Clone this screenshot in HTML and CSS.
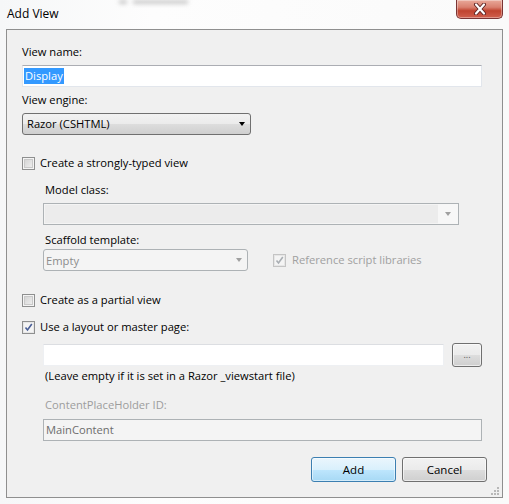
FILE: index.html
```html
<!DOCTYPE html>
<html>
<head>
<meta charset="utf-8">
<link rel="stylesheet" href="styles.css">
</head>
<body>
<div class="window">
  <div class="titlebar">
    <span class="title">Add View</span>
    <span class="ghost"><i class="g1"></i><i class="g2"></i></span>
    <span class="close">
      <svg width="20" height="12" viewBox="0 0 20 12"><path d="M6 1.5 L14 10.5 M14 1.5 L6 10.5" stroke="#5a2020" stroke-width="4" stroke-linecap="round"/><path d="M6 1.5 L14 10.5 M14 1.5 L6 10.5" stroke="#ffffff" stroke-width="2.2" stroke-linecap="round"/></svg>
    </span>
  </div>
  <div class="panel">
    <div class="label l-name">View name:</div>
    <div class="textbox tb-name"><span class="sel">Display</span></div>
    <div class="label l-engine">View engine:</div>
    <div class="combo combo-engine"><span>Razor (CSHTML)</span><span class="arrow"></span></div>

    <div class="check-row r-strong"><span class="cb"></span><span>Create a strongly-typed view</span></div>
    <div class="indent">
      <div class="label l-model">Model class:</div>
      <div class="dcombo dcombo-model"><span class="dfield"></span><span class="darrow-area"><span class="arrow dis"></span></span></div>
      <div class="label l-scaffold">Scaffold template:</div>
      <div class="scaffold-row">
        <div class="ddrop"><span>Empty</span><span class="arrow dis"></span></div>
        <div class="check-row dis-row"><span class="cb checked disabled"><svg width="9" height="9" viewBox="0 0 9 9"><path d="M1.5 4.5 L3.5 7 L7.8 1" fill="none" stroke="#a9aeb3" stroke-width="1.6"/></svg></span><span>Reference script libraries</span></div>
      </div>
    </div>

    <div class="check-row r-partial"><span class="cb"></span><span>Create as a partial view</span></div>
    <div class="check-row r-layout"><span class="cb checked"><svg width="9" height="9" viewBox="0 0 9 9"><path d="M1.5 4.5 L3.5 7 L7.8 1" fill="none" stroke="#4a5f97" stroke-width="1.6"/></svg></span><span>Use a layout or master page:</span></div>
    <div class="indent">
      <div class="layout-row">
        <div class="textbox tb-layout"></div>
        <div class="btn btn-browse">...</div>
      </div>
      <div class="label hint">(Leave empty if it is set in a Razor _viewstart file)</div>
      <div class="label l-cph gray">ContentPlaceHolder ID:</div>
      <div class="dtextbox">MainContent</div>
    </div>
    <div class="buttons">
      <div class="btn btn-add">Add</div>
      <div class="btn btn-cancel">Cancel</div>
    </div>
    <div class="grip"><i></i><i></i><i></i><i></i><i></i><i></i></div>
  </div>
</div>
</body>
</html>
```
FILE: styles.css
```css
html, body {
  margin: 0;
  padding: 0;
}
body {
  width: 509px;
  height: 504px;
  background: #fbfbfc;
  font-family: "Open Sans", "Noto Sans", sans-serif;
  font-size: 11.2px;
  color: #000;
  overflow: hidden;
}
.window {
  width: 509px;
  height: 504px;
  box-sizing: border-box;
  padding: 0 6px 0 6px;
  background: linear-gradient(90deg, #f6f7f8 0%, #fdfdfd 30%, #fafafa 100%);
}
.titlebar {
  height: 29px;
  display: flex;
  align-items: flex-start;
}
.title {
  margin-top: 6px;
  margin-left: 1px;
  font-size: 12px;
  line-height: 16px;
}
.ghost {
  margin-left: 60px;
  margin-top: 0;
  display: flex;
  gap: 6px;
  filter: blur(2px);
  opacity: 0.6;
}
.ghost i {
  display: block;
  background: #a8a8a8;
  height: 4px;
}
.ghost .g1 { width: 8px; }
.ghost .g2 { width: 55px; }
.close {
  margin-left: auto;
  width: 47px;
  height: 19px;
  box-sizing: border-box;
  border: 1px solid #7a3434;
  border-top: none;
  border-radius: 0 0 5px 5px;
  background: linear-gradient(#e9a99a 0%, #d9806f 40%, #c0432f 60%, #d0604e 100%);
  display: flex;
  align-items: center;
  justify-content: center;
  box-shadow: inset 0 0 0 1px rgba(255,255,255,0.35);
}
.panel {
  height: 469px;
  box-sizing: border-box;
  border: 1px solid #8f8f8f;
  background: #f0f0f0;
  padding: 14px 0 0 15px;
  position: relative;
}
.label {
  line-height: 16px;
  height: 16px;
  white-space: nowrap;
}
.gray { color: #9d9d9d; }
.textbox {
  height: 22px;
  box-sizing: border-box;
  background: #fff;
  border: 1px solid #e2e6ec;
  border-top-color: #abadb3;
}
.tb-name {
  margin-top: 5px;
  width: 460px;
  padding: 2px 0 0 1px;
  line-height: 16px;
}
.sel {
  background: #3399ff;
  color: #fff;
  padding: 0 1px;
  display: inline-block;
  line-height: 16px;
}
.l-engine { margin-top: 5px; }
.combo {
  margin-top: 5px;
  width: 229px;
  height: 22px;
  box-sizing: border-box;
  border: 1px solid #707070;
  border-radius: 3px;
  background: linear-gradient(#f2f2f2 0%, #ebebeb 50%, #dddddd 51%, #cfcfcf 100%);
  display: flex;
  align-items: center;
  justify-content: space-between;
  padding: 0 5px 0 4px;
  line-height: 16px;
}
.arrow {
  width: 0;
  height: 0;
  border-left: 3.5px solid transparent;
  border-right: 3.5px solid transparent;
  border-top: 4px solid #000;
}
.arrow.dis { border-top-color: #a0a0a0; }
.check-row {
  display: flex;
  align-items: center;
  height: 16px;
  line-height: 16px;
  white-space: nowrap;
}
.cb {
  width: 13px;
  height: 13px;
  box-sizing: border-box;
  border: 1px solid #8e8f8f;
  margin-right: 5px;
  background: #f4f4f4;
  box-shadow: inset 0 0 0 1px #f4f4f4, inset 0 0 0 2px #c9c9c9;
  background-image: linear-gradient(135deg, #cfcfcf, #f3f3f3);
  display: flex;
  align-items: center;
  justify-content: center;
  margin-top: 1px;
}
.cb.checked {
  background: #f4f4f4;
  box-shadow: inset 0 0 0 1px #e6e6e6;
}
.cb.disabled {
  border-color: #c4c4c4;
  background: #f4f4f4;
}
.r-strong { margin-top: 20px; }
.indent { padding-left: 21px; }
.indent > .label { padding-left: 2px; }
.l-model { margin-top: 11px; }
.dcombo {
  margin-top: 5px;
  width: 416px;
  height: 22px;
  box-sizing: border-box;
  border: 1px solid #adb2b5;
  background: #f4f4f4;
  display: flex;
}
.dfield {
  flex: 1;
  margin: 1px 0 1px 1px;
  background: #ececec;
}
.darrow-area {
  width: 20px;
  display: flex;
  align-items: center;
  justify-content: center;
  background: #f7f7f7;
}
.l-scaffold { margin-top: 7px; }
.scaffold-row {
  margin-top: 1px;
  display: flex;
  align-items: center;
}
.ddrop {
  width: 205px;
  height: 22px;
  box-sizing: border-box;
  border: 1px solid #adb2b5;
  border-radius: 3px;
  background: #f4f4f4;
  color: #8d8d8d;
  display: flex;
  align-items: center;
  justify-content: space-between;
  padding: 0 5px 0 2px;
}
.dis-row {
  margin-left: 25px;
  color: #a0a0a0;
}
.dis-row .cb { margin-right: 6px; }
.r-partial { margin-top: 21px; }
.r-layout { margin-top: 11px; }
.layout-row {
  margin-top: 8px;
  display: flex;
  align-items: center;
}
.tb-layout {
  width: 401px;
  border-color: #eef0f3;
  border-top-color: #dcdee2;
}
.btn {
  box-sizing: border-box;
  border: 1px solid #707070;
  border-radius: 3px;
  background: linear-gradient(#f2f2f2 0%, #ebebeb 50%, #dddddd 51%, #cfcfcf 100%);
  display: flex;
  align-items: center;
  justify-content: center;
  box-shadow: inset 0 0 0 1px rgba(255,255,255,0.6);
}
.btn-browse {
  margin-left: 8px;
  width: 30px;
  height: 24px;
  font-size: 9px;
  color: #555;
  padding-bottom: 2px;
}
.hint { margin-top: 1px; }
.l-cph { margin-top: 13px; }
.dtextbox {
  margin-top: 6px;
  width: 439px;
  height: 22px;
  box-sizing: border-box;
  border: 1px solid #adb2b5;
  background: #f4f4f4;
  color: #6d6d6d;
  line-height: 20px;
  padding-left: 2px;
}
.buttons {
  margin-top: 16px;
  display: flex;
  justify-content: flex-end;
  gap: 6px;
  padding-right: 15px;
}
.btn-add, .btn-cancel {
  width: 85px;
  height: 25px;
  font-size: 11.5px;
}
.btn-add {
  border-color: #3c7fb1;
  background: linear-gradient(#eaf6fd 0%, #d9f0fc 50%, #bee6fd 51%, #a7d9f5 100%);
  box-shadow: inset 0 0 0 1px rgba(255,255,255,0.5);
}
.grip {
  position: absolute;
  right: 3px;
  bottom: 2px;
  width: 9px;
  height: 9px;
}
.grip i {
  position: absolute;
  width: 2px;
  height: 2px;
  background: #b8b8b8;
}
.grip i:nth-child(1) { right: 0; bottom: 0; }
.grip i:nth-child(2) { right: 3px; bottom: 0; }
.grip i:nth-child(3) { right: 6px; bottom: 0; }
.grip i:nth-child(4) { right: 0; bottom: 3px; }
.grip i:nth-child(5) { right: 3px; bottom: 3px; }
.grip i:nth-child(6) { right: 0; bottom: 6px; }
```
